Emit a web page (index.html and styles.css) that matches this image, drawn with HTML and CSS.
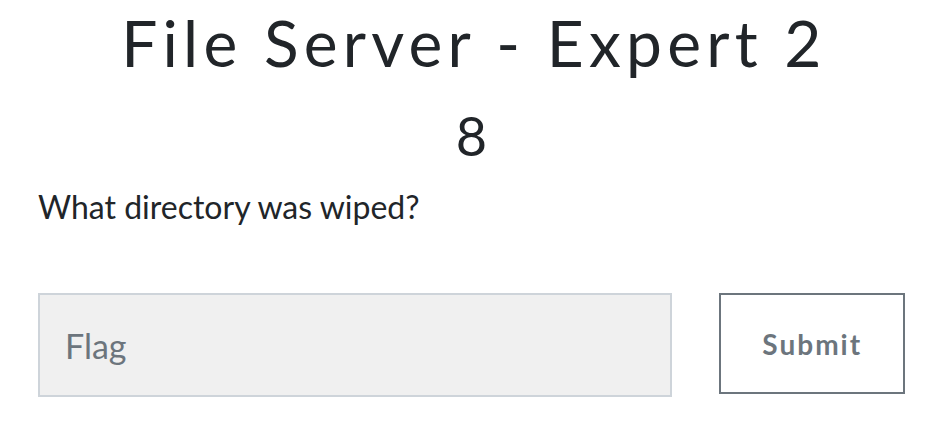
FILE: index.html
```html
<!DOCTYPE html>
<html lang="en">
<head>
    <meta charset="UTF-8">
    <meta name="viewport" content="width=device-width, initial-scale=1.0">
    <title>File Server - Expert 2</title>
    <link rel="stylesheet" href="styles.css">
</head>
<body>
    <div class="challenge">
        <h2 class="challenge-name">File Server - Expert 2</h2>
        <h3 class="challenge-value">8</h3>
        <div class="challenge-desc">
            <p>What directory was wiped?</p>
        </div>

        <form class="submit-row">
            <input type="text" class="flag-input" placeholder="Flag">
            <button type="submit" class="submit-btn">Submit</button>
        </form>
    </div>
</body>
</html>
```

FILE: styles.css
```css
* {
    margin: 0;
    padding: 0;
    box-sizing: border-box;
}

body {
    background-color: #ffffff;
    color: #212529;
    font-family: 'Lato', sans-serif;
}

.challenge {
    padding: 0 21px 0 38px;
}

.challenge-name {
    text-align: center;
    font-family: 'Lato', sans-serif;
    font-weight: 400;
    font-size: 64px;
    letter-spacing: 5.2px;
    line-height: 1;
    padding-top: 11px;
    padding-left: 5px;
}

.challenge-value {
    text-align: center;
    font-weight: 400;
    font-size: 54px;
    line-height: 1;
    margin-top: 34px;
}

.challenge-desc {
    margin-top: 25px;
    font-size: 32px;
    line-height: 1.2;
}

.submit-row {
    display: flex;
    align-items: flex-start;
    gap: 47px;
    margin-top: 67px;
}

.flag-input {
    width: 636px;
    height: 104px;
    background-color: #f0f0f0;
    border: 2px solid #ced4da;
    padding: 0 25px;
    font-family: 'Lato', sans-serif;
    font-weight: 400;
    font-size: 34px;
    color: #495057;
}

.flag-input::placeholder {
    color: #6c757d;
}

.submit-btn {
    width: 186px;
    height: 101px;
    background-color: #ffffff;
    border: 2px solid #6c757d;
    color: #6c757d;
    font-family: 'Lato', sans-serif;
    font-weight: 700;
    font-size: 28px;
    letter-spacing: 2px;
    cursor: pointer;
}
```
